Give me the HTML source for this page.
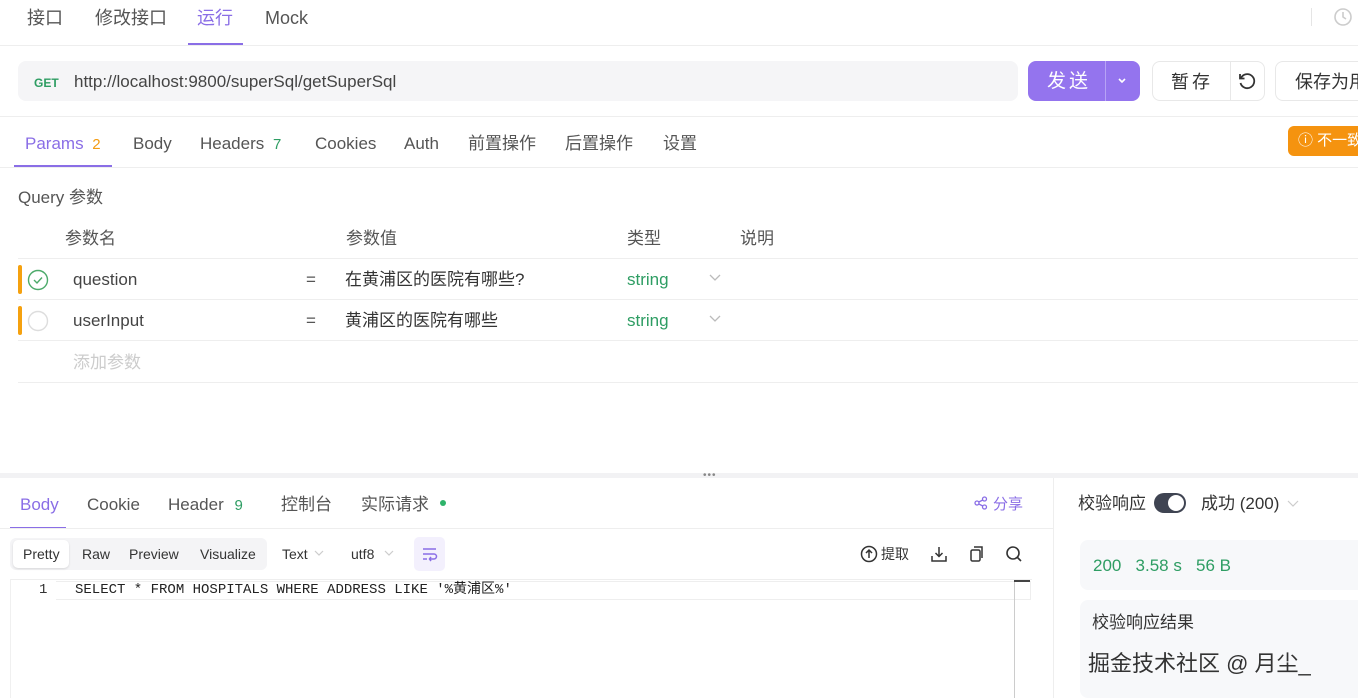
<!DOCTYPE html>
<html><head><meta charset="utf-8"><style>
*{margin:0;padding:0;box-sizing:border-box}
body{width:1358px;height:698px;overflow:hidden;background:#fff;font-family:"Liberation Sans","Noto Sans CJK SC",sans-serif;color:#555;position:relative}
.a{position:absolute;white-space:nowrap;line-height:20px}
.t{font-size:17px}
.p{color:#8a6ee6}
.g{color:#2e9d63}
.hl{position:absolute;left:0;right:0;height:1px;background:#eee}
</style></head><body>
<!-- top tabs -->
<div class="a t" style="left:27px;top:8px;font-size:18px;color:#555">接口</div>
<div class="a t" style="left:95px;top:8px;font-size:18px">修改接口</div>
<div class="a t p" style="left:197px;top:8px;font-size:18px">运行</div>
<div class="a t" style="left:265px;top:8px;font-size:18px">Mock</div>
<div class="a" style="left:188px;top:43px;width:55px;height:2px;background:#8a6ee6"></div>
<div class="hl" style="top:45px"></div>
<div class="a" style="left:1311px;top:8px;width:1px;height:18px;background:#e5e5e5"></div>
<svg class="a" style="left:1333px;top:7px" width="20" height="20" viewBox="0 0 20 20" fill="none" stroke="#ccc" stroke-width="1.6"><circle cx="10" cy="10" r="8"/><path d="M10 5v5l3 2"/></svg>
<!-- URL bar -->
<div class="a" style="left:18px;top:61px;width:1000px;height:40px;background:#f5f5f7;border-radius:8px"></div>
<div class="a" style="left:34px;top:73px;font-size:12px;font-weight:bold;color:#2e9d63">GET</div>
<div class="a t" style="left:74px;top:72px;color:#444">http://localhost:9800/superSql/getSuperSql</div>
<div class="a" style="left:1028px;top:61px;width:112px;height:40px;background:#9474ee;border-radius:8px"></div>
<div class="a" style="left:1105px;top:61px;width:1px;height:40px;background:#b7a3f5"></div>
<div class="a" style="left:1047px;top:72px;font-size:19px;color:#fff;letter-spacing:3px">发送</div>
<svg class="a" style="left:1116px;top:76px" width="12" height="10" viewBox="0 0 12 10" fill="none" stroke="#fff" stroke-width="1.6"><path d="M3 3l3 3 3-3"/></svg>
<div class="a" style="left:1152px;top:61px;width:113px;height:40px;border:1px solid #e8e8e8;border-radius:8px"></div>
<div class="a" style="left:1230px;top:62px;width:1px;height:38px;background:#e8e8e8"></div>
<div class="a" style="left:1171px;top:72px;font-size:18px;color:#333;letter-spacing:3px">暂存</div>
<svg class="a" style="left:1237px;top:71px" width="20" height="20" viewBox="0 0 20 20" fill="none" stroke="#333" stroke-width="1.8"><path d="M4 7a7 7 0 1 1-.5 5"/><path d="M3 3v4.5h4.5"/></svg>
<div class="a" style="left:1275px;top:61px;width:100px;height:40px;border:1px solid #e8e8e8;border-radius:8px"></div>
<div class="a" style="left:1295px;top:72px;font-size:18px;color:#333">保存为用例</div>
<div class="hl" style="top:116px"></div>
<!-- param tabs -->
<div class="a t p" style="left:25px;top:134px">Params <span style="color:#f39c12;font-size:15px;margin-left:4px">2</span></div>
<div class="a" style="left:14px;top:165px;width:98px;height:2px;background:#8a6ee6"></div>
<div class="a t" style="left:133px;top:134px">Body</div>
<div class="a t" style="left:200px;top:134px">Headers <span class="g" style="font-size:15px;margin-left:4px">7</span></div>
<div class="a t" style="left:315px;top:134px">Cookies</div>
<div class="a t" style="left:404px;top:134px">Auth</div>
<div class="a t" style="left:468px;top:134px">前置操作</div>
<div class="a t" style="left:565px;top:134px">后置操作</div>
<div class="a t" style="left:663px;top:134px">设置</div>
<div class="a" style="left:1288px;top:126px;width:80px;height:30px;background:#f5930f;border-radius:6px;color:#fff;font-size:15px;padding:5px 0 0 10px">ⓘ 不一致</div>
<div class="hl" style="top:167px"></div>
<!-- query -->
<div class="a t" style="left:18px;top:188px">Query 参数</div>
<div class="a t" style="left:65px;top:229px">参数名</div>
<div class="a t" style="left:346px;top:229px">参数值</div>
<div class="a t" style="left:627px;top:229px">类型</div>
<div class="a t" style="left:740px;top:229px">说明</div>
<div class="a" style="left:18px;top:258px;right:0;height:1px;background:#eee"></div>
<div class="a" style="left:18px;top:265px;width:4px;height:29px;background:#f5a10f;border-radius:2px"></div>
<svg class="a" style="left:27px;top:269px" width="22" height="22" viewBox="0 0 22 22" fill="none" stroke="#4caa6a" stroke-width="1.4"><circle cx="11" cy="11" r="9.5"/><path d="M7 11l3 3 5-5.5"/></svg>
<div class="a t" style="left:73px;top:270px;color:#444">question</div>
<div class="a t" style="left:306px;top:270px">=</div>
<div class="a t" style="left:345px;top:270px;color:#333">在黄浦区的医院有哪些?</div>
<div class="a t g" style="left:627px;top:270px">string</div>
<svg class="a" style="left:709px;top:274px" width="12" height="8" viewBox="0 0 12 8" fill="none" stroke="#bbb" stroke-width="1.3"><path d="M1 1l5 5 5-5"/></svg>
<div class="a" style="left:18px;top:299px;right:0;height:1px;background:#eee"></div>
<div class="a" style="left:18px;top:306px;width:4px;height:29px;background:#f5a10f;border-radius:2px"></div>
<svg class="a" style="left:27px;top:310px" width="22" height="22" viewBox="0 0 22 22" fill="none" stroke="#ddd" stroke-width="1.4"><circle cx="11" cy="11" r="9.5"/></svg>
<div class="a t" style="left:73px;top:311px;color:#444">userInput</div>
<div class="a t" style="left:306px;top:311px">=</div>
<div class="a t" style="left:345px;top:311px;color:#333">黄浦区的医院有哪些</div>
<div class="a t g" style="left:627px;top:311px">string</div>
<svg class="a" style="left:709px;top:315px" width="12" height="8" viewBox="0 0 12 8" fill="none" stroke="#bbb" stroke-width="1.3"><path d="M1 1l5 5 5-5"/></svg>
<div class="a" style="left:18px;top:340px;right:0;height:1px;background:#eee"></div>
<div class="a t" style="left:73px;top:353px;color:#ccc">添加参数</div>
<div class="a" style="left:18px;top:382px;right:0;height:1px;background:#eee"></div>
<!-- divider -->
<div class="a" style="left:0;top:473px;width:1358px;height:5px;background:#f2f2f4"></div>
<div class="a" style="left:703px;top:466px;font-size:10px;color:#888;letter-spacing:1px">•••</div>
<!-- response tabs -->
<div class="a t p" style="left:20px;top:495px">Body</div>
<div class="a" style="left:10px;top:527px;width:56px;height:2px;background:#8a6ee6"></div>
<div class="a t" style="left:87px;top:495px">Cookie</div>
<div class="a t" style="left:168px;top:495px">Header <span class="g" style="font-size:15px;margin-left:6px">9</span></div>
<div class="a t" style="left:281px;top:495px">控制台</div>
<div class="a t" style="left:361px;top:495px">实际请求</div>
<div class="a" style="left:440px;top:500px;width:6px;height:6px;border-radius:3px;background:#2eb36a"></div>
<svg class="a" style="left:974px;top:496px" width="14" height="14" viewBox="0 0 14 14" fill="none" stroke="#8a6ee6" stroke-width="1.3"><circle cx="10.5" cy="3" r="2"/><circle cx="3" cy="7" r="2"/><circle cx="10.5" cy="11" r="2"/><path d="M4.8 6l4-2M4.8 8l4 2"/></svg>
<div class="a" style="left:993px;top:495px;font-size:15px;color:#8a6ee6">分享</div>
<div class="a" style="left:0;top:528px;width:1053px;height:1px;background:#eee"></div>
<div class="a" style="left:1053px;top:478px;width:1px;height:220px;background:#eee"></div>
<!-- toolbar -->
<div class="a" style="left:10px;top:538px;width:257px;height:32px;background:#f4f4f6;border-radius:6px"></div>
<div class="a" style="left:13px;top:540px;width:56px;height:28px;background:#fff;border-radius:5px;box-shadow:0 1px 2px rgba(0,0,0,.12)"></div>
<div class="a" style="left:23px;top:544px;font-size:14px;color:#333">Pretty</div>
<div class="a" style="left:82px;top:544px;font-size:14px;color:#333">Raw</div>
<div class="a" style="left:129px;top:544px;font-size:14px;color:#333">Preview</div>
<div class="a" style="left:200px;top:544px;font-size:14px;color:#333">Visualize</div>
<div class="a" style="left:282px;top:544px;font-size:14px;color:#333">Text</div>
<svg class="a" style="left:314px;top:550px" width="10" height="7" viewBox="0 0 10 7" fill="none" stroke="#ccc" stroke-width="1.2"><path d="M1 1l4 4 4-4"/></svg>
<div class="a" style="left:351px;top:544px;font-size:14px;color:#333">utf8</div>
<svg class="a" style="left:384px;top:550px" width="10" height="7" viewBox="0 0 10 7" fill="none" stroke="#ccc" stroke-width="1.2"><path d="M1 1l4 4 4-4"/></svg>
<div class="a" style="left:414px;top:537px;width:31px;height:34px;background:#f3f0fd;border-radius:5px"></div>
<svg class="a" style="left:421px;top:546px" width="17" height="16" viewBox="0 0 17 16" fill="none" stroke="#8a6ee6" stroke-width="1.5"><path d="M2 3h13M2 8h11a2.5 2.5 0 0 1 0 5H9M2 13h4"/><path d="M10 11l-1.5 2 1.5 2"/></svg>
<svg class="a" style="left:860px;top:545px" width="18" height="18" viewBox="0 0 18 18" fill="none" stroke="#333" stroke-width="1.5"><circle cx="9" cy="9" r="7.5"/><path d="M9 13V5M6 8l3-3 3 3"/></svg>
<div class="a" style="left:881px;top:544px;font-size:14px;color:#333">提取</div>
<svg class="a" style="left:930px;top:545px" width="18" height="18" viewBox="0 0 18 18" fill="none" stroke="#333" stroke-width="1.5"><path d="M9 2v9M5.5 8L9 11.5 12.5 8M2 11v5h14v-5"/></svg>
<svg class="a" style="left:968px;top:545px" width="18" height="18" viewBox="0 0 18 18" fill="none" stroke="#333" stroke-width="1.5"><rect x="3" y="5" width="9" height="11" rx="1.5"/><path d="M6 2h8v11"/></svg>
<svg class="a" style="left:1005px;top:545px" width="18" height="18" viewBox="0 0 18 18" fill="none" stroke="#333" stroke-width="1.6"><circle cx="8" cy="8" r="6"/><path d="M12.5 12.5L16 16"/></svg>
<!-- code -->
<div class="a" style="left:10px;top:579px;width:1022px;height:1px;background:#eee"></div>
<div class="a" style="left:56px;top:581px;width:975px;height:19px;border:1px solid #eee;border-left:none"></div>
<div class="a" style="left:10px;top:579px;width:1px;height:119px;background:#f0f0f0"></div>
<div class="a" style="left:1014px;top:580px;width:1px;height:118px;background:#ccc"></div>
<div class="a" style="left:1014px;top:580px;width:16px;height:2px;background:#444"></div>
<div class="a" style="left:39px;top:580px;font-family:'Liberation Mono','Noto Sans CJK SC',monospace;font-size:14px;color:#333">1</div>
<div class="a" style="left:75px;top:580px;font-family:'Liberation Mono','Noto Sans CJK SC',monospace;font-size:14px;color:#222">SELECT * FROM HOSPITALS WHERE ADDRESS LIKE '%黄浦区%'</div>
<!-- right panel -->
<div class="a t" style="left:1078px;top:494px;color:#333">校验响应</div>
<div class="a" style="left:1154px;top:493px;width:32px;height:20px;border-radius:10px;background:#3f4452"></div>
<div class="a" style="left:1168px;top:495px;width:16px;height:16px;border-radius:8px;background:#fff"></div>
<div class="a t" style="left:1201px;top:494px;color:#333">成功 (200)</div>
<svg class="a" style="left:1287px;top:500px" width="12" height="8" viewBox="0 0 12 8" fill="none" stroke="#ccc" stroke-width="1.2"><path d="M1 1l5 5 5-5"/></svg>
<div class="a" style="left:1080px;top:540px;width:290px;height:50px;background:#f7f8fa;border-radius:8px"></div>
<div class="a t g" style="left:1093px;top:556px">200&nbsp;&nbsp;&nbsp;3.58 s&nbsp;&nbsp;&nbsp;56 B</div>
<div class="a" style="left:1080px;top:600px;width:290px;height:98px;background:#f7f8fa;border-radius:8px"></div>
<div class="a t" style="left:1092px;top:613px;color:#333">校验响应结果</div>
<div class="a" style="left:1088px;top:651px;font-size:22px;line-height:26px;color:#333">掘金技术社区 @ 月尘_</div>
</body></html>
